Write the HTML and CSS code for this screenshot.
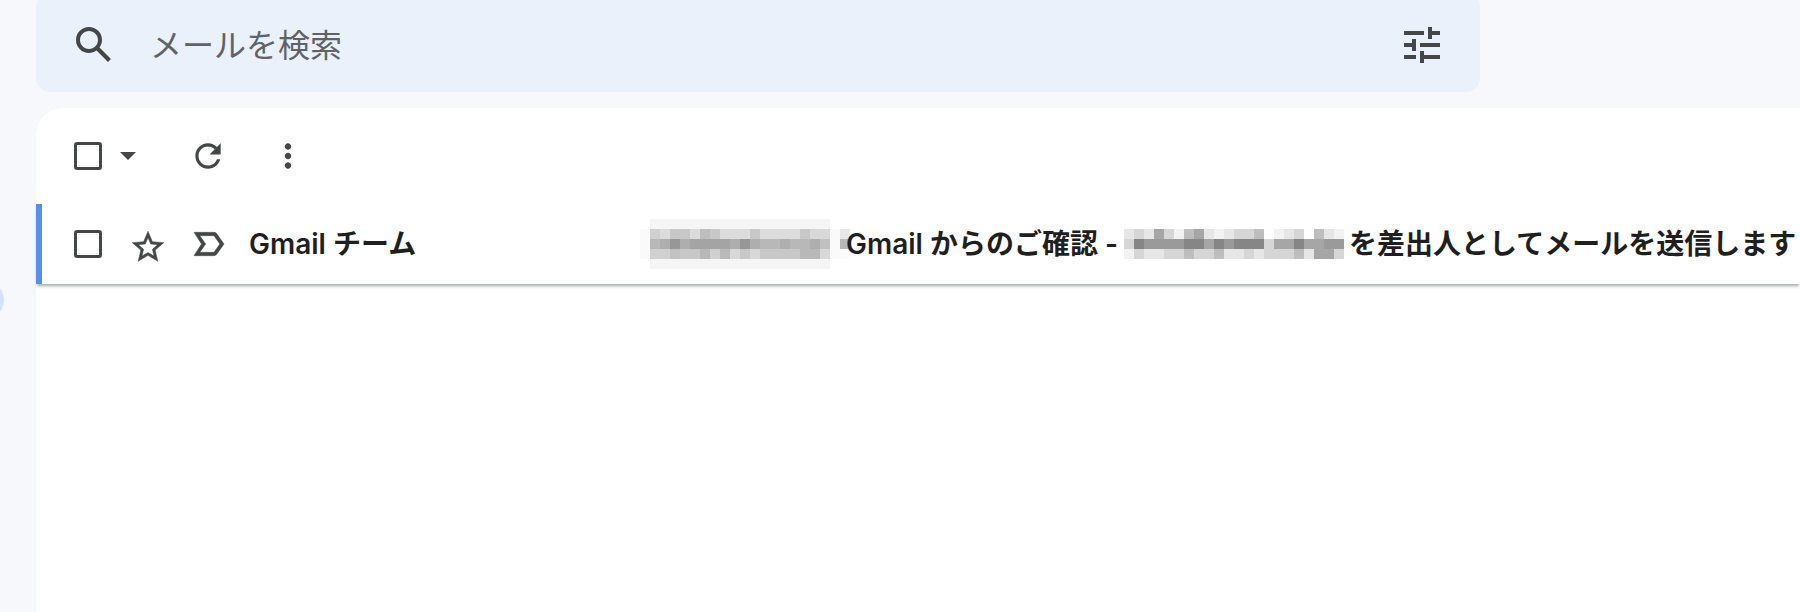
FILE: index.html
```html
<!DOCTYPE html>
<html lang="ja">
<head>
<meta charset="utf-8">
<title>Gmail</title>
<link rel="stylesheet" href="styles.css">
</head>
<body>
<div class="compose-dot"></div>
<main class="main">
  <form class="search">
    <svg class="icon icon-search" viewBox="0 0 24 24"><path d="M20.49 19l-5.73-5.73C15.53 12.2 16 10.91 16 9.5A6.5 6.5 0 1 0 9.5 16c1.41 0 2.7-.47 3.77-1.24L19 20.49 20.49 19zM5 9.5C5 7.01 7.01 5 9.5 5S14 7.01 14 9.5 11.99 14 9.5 14 5 11.99 5 9.5z"/></svg>
    <span class="search-text">メールを検索</span>
    <svg class="icon icon-tune" viewBox="0 0 24 24"><path d="M3 17v2h6v-2H3zM3 5v2h10V5H3zm10 16v-2h8v-2h-8v-2h-2v6h2zM7 9v2H3v2h4v2h2V9H7zm14 4v-2H11v2h10zm-6-4h2V7h4V5h-4V3h-2v6z"/></svg>
  </form>
  <section class="panel">
    <div class="toolbar">
      <span class="check"></span>
      <span class="caret"></span>
      <svg class="icon icon-m icon-refresh" viewBox="0 0 24 24"><path d="M17.65 6.35C16.2 4.9 14.21 4 12 4c-4.42 0-7.99 3.58-7.99 8s3.57 8 7.99 8c3.73 0 6.84-2.55 7.73-6h-2.08c-.82 2.33-3.04 4-5.65 4-3.31 0-6-2.69-6-6s2.69-6 6-6c1.66 0 3.14.69 4.22 1.78L13 11h7V4l-2.35 2.35z"/></svg>
      <svg class="icon icon-m icon-more" viewBox="0 0 24 24"><path d="M12 8c1.1 0 2-.9 2-2s-.9-2-2-2-2 .9-2 2 .9 2 2 2zm0 2c-1.1 0-2 .9-2 2s.9 2 2 2 2-.9 2-2-.9-2-2-2zm0 6c-1.1 0-2 .9-2 2s.9 2 2 2 2-.9 2-2-.9-2-2-2z"/></svg>
    </div>
    <div class="row">
      <span class="check"></span>
      <svg class="icon icon-m icon-star" viewBox="0 0 24 24"><path d="M22 9.24l-7.19-.62L12 2 9.19 8.63 2 9.24l5.46 4.73L5.82 21 12 17.27 18.18 21l-1.63-7.03L22 9.24zM12 15.4l-3.76 2.27 1-4.28-3.32-2.88 4.38-.38L12 6.1l1.71 4.04 4.38.38-3.32 2.88 1 4.28L12 15.4z"/></svg>
      <svg class="icon icon-label" viewBox="0 0 24 24"><path d="M15 19H3l4.5-7L3 5h12c.65 0 1.26.31 1.63.84L21 12l-4.37 6.16c-.37.53-.98.84-1.63.84zm-8.5-2H15l3.5-5L15 7H6.5L10 12l-3.5 5z"/></svg>
      <span class="sender">Gmail チーム</span>
      <svg class="mosaic mosaic-a" width="210" height="50" viewBox="0 0 21 5" shape-rendering="crispEdges">
        <rect x="1" y="0" width="18" height="1" fill="#f5f5f5"/><rect x="1" y="4" width="18" height="1" fill="#f5f5f5"/>
        <rect x="0" y="1" width="1" height="3" fill="#fafafa"/><rect x="19" y="1" width="1" height="3" fill="#fafafa"/>
        <rect x="20" y="1" width="1" height="1" fill="#e8e8e8"/><rect x="20" y="2" width="1" height="1" fill="#b8b8b8"/><rect x="20" y="3" width="1" height="1" fill="#fcfcfc"/>
        <g fill="#d0d0d0"><rect x="1" y="1" width="1" height="1"/><rect x="1" y="3" width="2" height="1"/><rect x="7" y="3" width="1" height="1"/></g>
        <g fill="#dcdcdc"><rect x="2" y="1" width="1" height="1"/><rect x="5" y="1" width="1" height="1"/><rect x="8" y="1" width="3" height="1"/><rect x="12" y="1" width="4" height="1"/></g>
        <g fill="#c8c8c8"><rect x="3" y="1" width="2" height="1"/><rect x="6" y="1" width="2" height="1"/><rect x="11" y="1" width="1" height="1"/><rect x="16" y="1" width="1" height="1"/><rect x="4" y="3" width="2" height="1"/><rect x="10" y="3" width="1" height="1"/><rect x="12" y="3" width="4" height="1"/></g>
        <g fill="#d8d8d8"><rect x="17" y="1" width="2" height="1"/><rect x="9" y="3" width="1" height="1"/><rect x="11" y="3" width="1" height="1"/><rect x="18" y="3" width="1" height="1"/></g>
        <rect x="6" y="1" width="1" height="1" fill="#bebebe"/>
        <g fill="#aeaeae"><rect x="2" y="2" width="1" height="1"/><rect x="4" y="2" width="1" height="1"/><rect x="9" y="2" width="1" height="1"/><rect x="11" y="2" width="1" height="1"/><rect x="14" y="2" width="1" height="1"/><rect x="17" y="2" width="1" height="1"/></g>
        <g fill="#b8b8b8"><rect x="1" y="2" width="1" height="1"/><rect x="12" y="2" width="1" height="1"/><rect x="13" y="2" width="1" height="1"/><rect x="15" y="2" width="2" height="1"/><rect x="6" y="3" width="1" height="1"/><rect x="8" y="3" width="1" height="1"/><rect x="16" y="3" width="2" height="1"/></g>
        <g fill="#a4a4a4"><rect x="5" y="2" width="4" height="1"/></g>
        <g fill="#979797"><rect x="3" y="2" width="1" height="1"/><rect x="10" y="2" width="1" height="1"/></g>
        <rect x="18" y="2" width="1" height="1" fill="#c0c0c0"/><rect x="3" y="3" width="1" height="1" fill="#c2c2c2"/>
      </svg>
      <span class="subject">Gmail からのご確認 -<svg class="mosaic mosaic-b" width="220" height="30" viewBox="0 0 22 3" shape-rendering="crispEdges">
        <g fill="#e6e6e6"><rect x="0" y="0" width="1" height="1"/><rect x="2" y="0" width="1" height="1"/><rect x="8" y="0" width="1" height="1"/><rect x="10" y="0" width="1" height="1"/><rect x="16" y="0" width="1" height="1"/><rect x="20" y="0" width="1" height="1"/><rect x="2" y="2" width="2" height="1"/><rect x="10" y="2" width="2" height="1"/><rect x="13" y="2" width="1" height="1"/><rect x="18" y="2" width="1" height="1"/></g>
        <g fill="#d6d6d6"><rect x="1" y="0" width="1" height="1"/><rect x="4" y="0" width="1" height="1"/><rect x="11" y="0" width="2" height="1"/><rect x="17" y="0" width="1" height="1"/><rect x="0" y="1" width="1" height="1"/><rect x="14" y="1" width="1" height="1"/><rect x="1" y="2" width="1" height="1"/><rect x="4" y="2" width="2" height="1"/><rect x="7" y="2" width="2" height="1"/><rect x="12" y="2" width="1" height="1"/><rect x="14" y="2" width="3" height="1"/><rect x="21" y="2" width="1" height="1"/></g>
        <g fill="#f2f2f2"><rect x="5" y="0" width="1" height="1"/><rect x="9" y="0" width="1" height="1"/><rect x="15" y="0" width="1" height="1"/><rect x="21" y="0" width="1" height="1"/><rect x="0" y="2" width="1" height="1"/></g>
        <g fill="#fefefe"><rect x="14" y="0" width="1" height="1"/><rect x="18" y="0" width="1" height="1"/></g>
        <g fill="#bebebe"><rect x="6" y="0" width="1" height="1"/><rect x="13" y="0" width="1" height="1"/><rect x="19" y="0" width="1" height="1"/><rect x="6" y="2" width="1" height="1"/><rect x="9" y="2" width="1" height="1"/><rect x="17" y="2" width="1" height="1"/></g>
        <g fill="#a6a6a6"><rect x="3" y="0" width="1" height="1"/><rect x="7" y="0" width="1" height="1"/><rect x="8" y="1" width="1" height="1"/><rect x="15" y="1" width="1" height="1"/><rect x="16" y="1" width="1" height="1"/><rect x="18" y="1" width="2" height="1"/><rect x="19" y="2" width="2" height="1"/></g>
        <g fill="#9a9a9a"><rect x="2" y="1" width="4" height="1"/><rect x="10" y="1" width="1" height="1"/><rect x="20" y="1" width="2" height="1"/></g>
        <g fill="#868686"><rect x="1" y="1" width="1" height="1"/><rect x="6" y="1" width="2" height="1"/><rect x="9" y="1" width="1" height="1"/><rect x="11" y="1" width="3" height="1"/><rect x="17" y="1" width="1" height="1"/></g>
      </svg>を差出人としてメールを送信します</span>
    </div>
  </section>
</main>
</body>
</html>
```
FILE: styles.css
```css
* { box-sizing: border-box; }
html, body { height: 100%; }
body {
  margin: 0;
  height: 612px;
  overflow: hidden;
  position: relative;
  background: #f6f8fc;
  font-family: Inter, "Noto Sans CJK JP", sans-serif;
  color: #1f1f1f;
}
.compose-dot {
  position: absolute;
  left: -36px;
  top: 280px;
  width: 40px;
  height: 40px;
  border-radius: 50%;
  background: #d3e3fd;
}
.main {
  padding-left: 36px;
  margin-top: -6px;
  display: flex;
  flex-direction: column;
  gap: 16px;
}
.icon { display: block; flex: none; fill: #444746; }
.search {
  width: 1444px;
  height: 98px;
  padding: 0 34px 0 34px;
  display: flex;
  align-items: center;
  border-radius: 14px;
  background: #eaf1fb;
}
.icon-search, .icon-tune { width: 48px; height: 48px; margin-top: 4px; }
.search-text {
  margin-left: 32px;
  flex: 1;
  font-size: 32px;
  color: #5f6368;
}
.panel {
  height: 520px;
  background: #fff;
  border-top-left-radius: 27px;
}
.toolbar {
  height: 96px;
  display: flex;
  align-items: center;
  padding-left: 38px;
}
.check {
  flex: none;
  width: 28px;
  height: 28px;
  border: 3px solid #444746;
  border-radius: 3px;
}
.caret {
  margin-left: 18px;
  border-left: 8px solid transparent;
  border-right: 8px solid transparent;
  border-top: 8px solid #444746;
}
.icon-m { width: 38px; height: 38px; }
.icon-refresh { margin-left: 53px; }
.icon-more { margin-left: 42px; }
.row {
  height: 80px;
  display: flex;
  align-items: center;
  padding-left: 32px;
  border-left: 6px solid #5b8def;
  box-shadow: 0 3px 3px -1px rgba(60, 64, 67, .45);
  white-space: nowrap;
  font-size: 28px;
  font-weight: 600;
}
.icon-star, .icon-label { stroke: #444746; stroke-width: .3; }
.icon-star { margin-left: 27px; margin-top: 6px; }
.icon-label { width: 40px; height: 40px; margin-left: 22px; }
.sender { margin-left: 20px; width: 391px; flex: none; margin-top: -4px; }
.mosaic { flex: none; }
.mosaic-a { margin-right: -4px; }
.subject { display: flex; align-items: center; margin-top: -4px; }
.mosaic-b { margin: 4px 5px 0 6px; }
```
